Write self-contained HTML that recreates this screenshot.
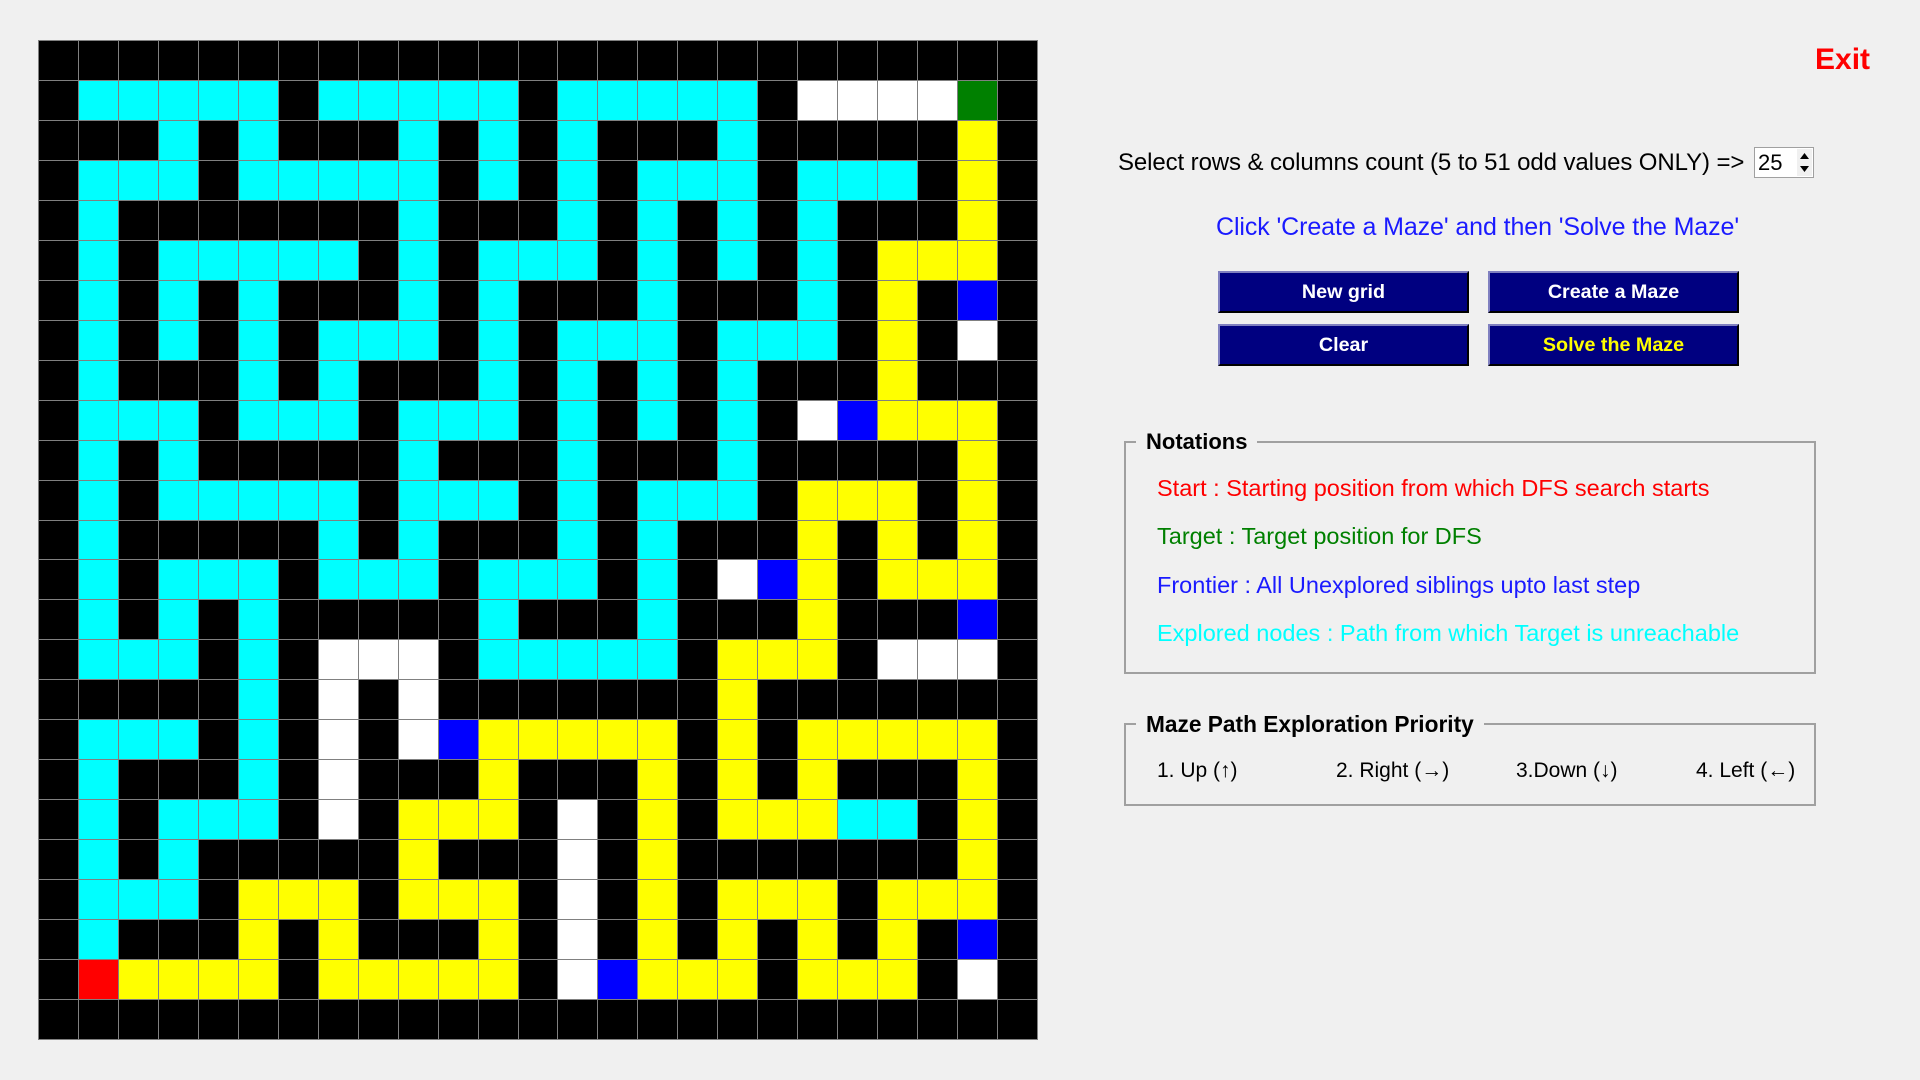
<!DOCTYPE html>
<html><head><meta charset="utf-8"><style>
html,body{margin:0;padding:0;width:1920px;height:1080px;background:#f0f0f0;overflow:hidden;font-family:"Liberation Sans",Arial,sans-serif}
.grid{position:absolute;left:38px;top:40px;width:1000px;height:1000px;box-sizing:border-box;padding:1px;background:#808080;display:grid;grid-template-columns:repeat(25,1fr);grid-template-rows:repeat(25,1fr);gap:1px}
.grid>*{display:block}
k{background:#000}c{background:#0ff}w{background:#fff}y{background:#ff0}u{background:#00f;text-decoration:none}g{background:#008000}r{background:#f00}
.t{position:absolute;white-space:nowrap}
.btn{position:absolute;width:251px;height:42px;background:#000080;color:#fff;font-weight:bold;font-size:19.7px;text-align:center;line-height:38px;box-sizing:border-box;border-top:2px solid #8080c0;border-left:2px solid #8080c0;border-right:2px solid #000;border-bottom:2px solid #000}
.fs{position:absolute;border:2px solid #a0a0a0;box-sizing:border-box}
.lg{position:absolute;background:#f0f0f0;font-weight:bold;font-size:22px;padding:0 10px;line-height:26px}
.n{font-size:23.5px;line-height:28px}
.p{font-size:21px;line-height:28px}
</style></head><body>
<div class="grid">
<k></k><k></k><k></k><k></k><k></k><k></k><k></k><k></k><k></k><k></k><k></k><k></k><k></k><k></k><k></k><k></k><k></k><k></k><k></k><k></k><k></k><k></k><k></k><k></k><k></k>
<k></k><c></c><c></c><c></c><c></c><c></c><k></k><c></c><c></c><c></c><c></c><c></c><k></k><c></c><c></c><c></c><c></c><c></c><k></k><w></w><w></w><w></w><w></w><g></g><k></k>
<k></k><k></k><k></k><c></c><k></k><c></c><k></k><k></k><k></k><c></c><k></k><c></c><k></k><c></c><k></k><k></k><k></k><c></c><k></k><k></k><k></k><k></k><k></k><y></y><k></k>
<k></k><c></c><c></c><c></c><k></k><c></c><c></c><c></c><c></c><c></c><k></k><c></c><k></k><c></c><k></k><c></c><c></c><c></c><k></k><c></c><c></c><c></c><k></k><y></y><k></k>
<k></k><c></c><k></k><k></k><k></k><k></k><k></k><k></k><k></k><c></c><k></k><k></k><k></k><c></c><k></k><c></c><k></k><c></c><k></k><c></c><k></k><k></k><k></k><y></y><k></k>
<k></k><c></c><k></k><c></c><c></c><c></c><c></c><c></c><k></k><c></c><k></k><c></c><c></c><c></c><k></k><c></c><k></k><c></c><k></k><c></c><k></k><y></y><y></y><y></y><k></k>
<k></k><c></c><k></k><c></c><k></k><c></c><k></k><k></k><k></k><c></c><k></k><c></c><k></k><k></k><k></k><c></c><k></k><k></k><k></k><c></c><k></k><y></y><k></k><u></u><k></k>
<k></k><c></c><k></k><c></c><k></k><c></c><k></k><c></c><c></c><c></c><k></k><c></c><k></k><c></c><c></c><c></c><k></k><c></c><c></c><c></c><k></k><y></y><k></k><w></w><k></k>
<k></k><c></c><k></k><k></k><k></k><c></c><k></k><c></c><k></k><k></k><k></k><c></c><k></k><c></c><k></k><c></c><k></k><c></c><k></k><k></k><k></k><y></y><k></k><k></k><k></k>
<k></k><c></c><c></c><c></c><k></k><c></c><c></c><c></c><k></k><c></c><c></c><c></c><k></k><c></c><k></k><c></c><k></k><c></c><k></k><w></w><u></u><y></y><y></y><y></y><k></k>
<k></k><c></c><k></k><c></c><k></k><k></k><k></k><k></k><k></k><c></c><k></k><k></k><k></k><c></c><k></k><k></k><k></k><c></c><k></k><k></k><k></k><k></k><k></k><y></y><k></k>
<k></k><c></c><k></k><c></c><c></c><c></c><c></c><c></c><k></k><c></c><c></c><c></c><k></k><c></c><k></k><c></c><c></c><c></c><k></k><y></y><y></y><y></y><k></k><y></y><k></k>
<k></k><c></c><k></k><k></k><k></k><k></k><k></k><c></c><k></k><c></c><k></k><k></k><k></k><c></c><k></k><c></c><k></k><k></k><k></k><y></y><k></k><y></y><k></k><y></y><k></k>
<k></k><c></c><k></k><c></c><c></c><c></c><k></k><c></c><c></c><c></c><k></k><c></c><c></c><c></c><k></k><c></c><k></k><w></w><u></u><y></y><k></k><y></y><y></y><y></y><k></k>
<k></k><c></c><k></k><c></c><k></k><c></c><k></k><k></k><k></k><k></k><k></k><c></c><k></k><k></k><k></k><c></c><k></k><k></k><k></k><y></y><k></k><k></k><k></k><u></u><k></k>
<k></k><c></c><c></c><c></c><k></k><c></c><k></k><w></w><w></w><w></w><k></k><c></c><c></c><c></c><c></c><c></c><k></k><y></y><y></y><y></y><k></k><w></w><w></w><w></w><k></k>
<k></k><k></k><k></k><k></k><k></k><c></c><k></k><w></w><k></k><w></w><k></k><k></k><k></k><k></k><k></k><k></k><k></k><y></y><k></k><k></k><k></k><k></k><k></k><k></k><k></k>
<k></k><c></c><c></c><c></c><k></k><c></c><k></k><w></w><k></k><w></w><u></u><y></y><y></y><y></y><y></y><y></y><k></k><y></y><k></k><y></y><y></y><y></y><y></y><y></y><k></k>
<k></k><c></c><k></k><k></k><k></k><c></c><k></k><w></w><k></k><k></k><k></k><y></y><k></k><k></k><k></k><y></y><k></k><y></y><k></k><y></y><k></k><k></k><k></k><y></y><k></k>
<k></k><c></c><k></k><c></c><c></c><c></c><k></k><w></w><k></k><y></y><y></y><y></y><k></k><w></w><k></k><y></y><k></k><y></y><y></y><y></y><c></c><c></c><k></k><y></y><k></k>
<k></k><c></c><k></k><c></c><k></k><k></k><k></k><k></k><k></k><y></y><k></k><k></k><k></k><w></w><k></k><y></y><k></k><k></k><k></k><k></k><k></k><k></k><k></k><y></y><k></k>
<k></k><c></c><c></c><c></c><k></k><y></y><y></y><y></y><k></k><y></y><y></y><y></y><k></k><w></w><k></k><y></y><k></k><y></y><y></y><y></y><k></k><y></y><y></y><y></y><k></k>
<k></k><c></c><k></k><k></k><k></k><y></y><k></k><y></y><k></k><k></k><k></k><y></y><k></k><w></w><k></k><y></y><k></k><y></y><k></k><y></y><k></k><y></y><k></k><u></u><k></k>
<k></k><r></r><y></y><y></y><y></y><y></y><k></k><y></y><y></y><y></y><y></y><y></y><k></k><w></w><u></u><y></y><y></y><y></y><k></k><y></y><y></y><y></y><k></k><w></w><k></k>
<k></k><k></k><k></k><k></k><k></k><k></k><k></k><k></k><k></k><k></k><k></k><k></k><k></k><k></k><k></k><k></k><k></k><k></k><k></k><k></k><k></k><k></k><k></k><k></k><k></k>
</div>

<div class="t" style="left:1815px;top:42px;color:#f00;font-weight:bold;font-size:30px;line-height:36px">Exit</div>

<div class="t" style="left:1118px;top:148px;font-size:24px;line-height:30px;color:#000;letter-spacing:-0.1px">Select rows &amp; columns count (5 to 51 odd values ONLY) =&gt;</div>
<div style="position:absolute;left:1754px;top:147px;width:60px;height:31px;box-sizing:border-box;border:1px solid #a0a0a0;background:#fff;font-size:22px;line-height:29px;padding-left:3px">25
<div style="position:absolute;right:1px;top:1px;width:15px;height:27px;background:#f0f0f0"><svg width="15" height="27"><path d="M7.5 4 L12 10 L3 10 Z" fill="#000"/><path d="M7.5 23 L12 17 L3 17 Z" fill="#000"/></svg></div></div>

<div class="t" style="left:1216px;top:212px;font-size:25px;line-height:30px;color:#1a1aff;letter-spacing:-0.1px">Click 'Create a Maze' and then 'Solve the Maze'</div>

<div class="btn" style="left:1218px;top:271px">New grid</div>
<div class="btn" style="left:1488px;top:271px">Create a Maze</div>
<div class="btn" style="left:1218px;top:324px">Clear</div>
<div class="btn" style="left:1488px;top:324px;color:#ff0">Solve the Maze</div>

<div class="fs" style="left:1124px;top:441px;width:692px;height:233px"></div>
<div class="lg" style="left:1136px;top:429px">Notations</div>
<div class="t n" style="left:1157px;top:474px;color:#f00">Start : Starting position from which DFS search starts</div>
<div class="t n" style="left:1157px;top:522px;color:#008000">Target : Target position for DFS</div>
<div class="t n" style="left:1157px;top:571px;color:#1a1aff">Frontier : All Unexplored siblings upto last step</div>
<div class="t n" style="left:1157px;top:619px;color:#0ff">Explored nodes : Path from which Target is unreachable</div>

<div class="fs" style="left:1124px;top:723px;width:692px;height:83px"></div>
<div class="lg" style="left:1136px;top:711px;font-size:22.7px">Maze Path Exploration Priority</div>
<div class="t p" style="left:1157px;top:757px">1. Up (↑)</div>
<div class="t p" style="left:1336px;top:757px">2. Right (→)</div>
<div class="t p" style="left:1516px;top:757px">3.Down (↓)</div>
<div class="t p" style="left:1696px;top:757px">4. Left (←)</div>
</body></html>
